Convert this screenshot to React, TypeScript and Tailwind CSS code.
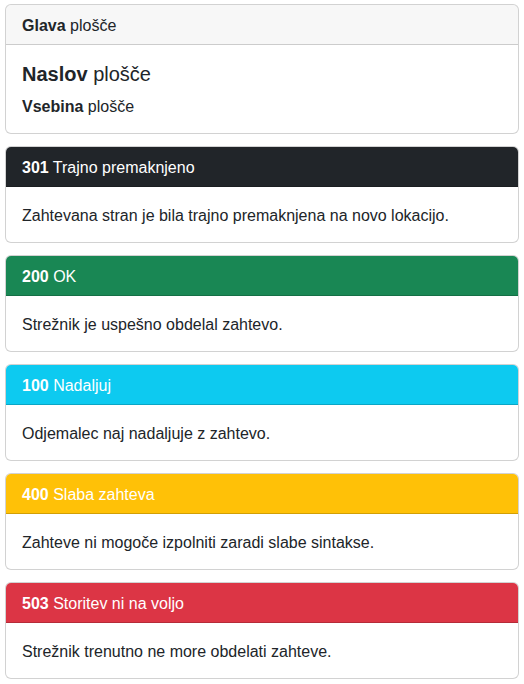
const statuses = [
	{
		code: "301",
		name: "Trajno premaknjeno",
		text: "Zahtevana stran je bila trajno premaknjena na novo lokacijo.",
		bg: "bg-[#212529]"
	},
	{
		code: "200",
		name: "OK",
		text: "Strežnik je uspešno obdelal zahtevo.",
		bg: "bg-[#198754]"
	},
	{
		code: "100",
		name: "Nadaljuj",
		text: "Odjemalec naj nadaljuje z zahtevo.",
		bg: "bg-[#0dcaf0]"
	},
	{
		code: "400",
		name: "Slaba zahteva",
		text: "Zahteve ni mogoče izpolniti zaradi slabe sintakse.",
		bg: "bg-[#ffc107]"
	},
	{
		code: "503",
		name: "Storitev ni na voljo",
		text: "Strežnik trenutno ne more obdelati zahteve.",
		bg: "bg-[#dc3545]"
	}
];

export default function App() {
	return (
		<div className="min-h-screen bg-white px-[5px] pt-[4px] text-[16px] leading-[23px] text-[#212529] font-['Liberation_Sans',Arial,sans-serif]">
			<div className="mb-3 rounded-[6px] border border-black/[0.175] bg-white">
				<div className="rounded-t-[5px] border-b border-black/[0.175] bg-black/[0.03] px-4 pt-[9px] pb-[7px]">
					<b className="font-bold">Glava</b> plošče
				</div>
				<div className="px-4 pt-[17px] pb-[14px]">
					<h5 className="mb-[9px] text-[20px] leading-[24px] font-medium">
						<b className="font-bold">Naslov</b> plošče
					</h5>
					<p className="leading-6">
						<b className="font-bold">Vsebina</b> plošče
					</p>
				</div>
			</div>

			{statuses.map(s => (
				<div
					key={s.code}
					className="mb-3 rounded-[6px] border border-black/[0.175] bg-white"
				>
					<div
						className={`${s.bg} rounded-t-[5px] border-b border-black/[0.175] px-4 pt-[9px] pb-[7px] text-white`}
					>
						<b className="font-bold">{s.code}</b> {s.name}
					</div>
					<div className="px-4 pt-[17px] pb-[15px]">
						<p>{s.text}</p>
					</div>
				</div>
			))}
		</div>
	);
}
